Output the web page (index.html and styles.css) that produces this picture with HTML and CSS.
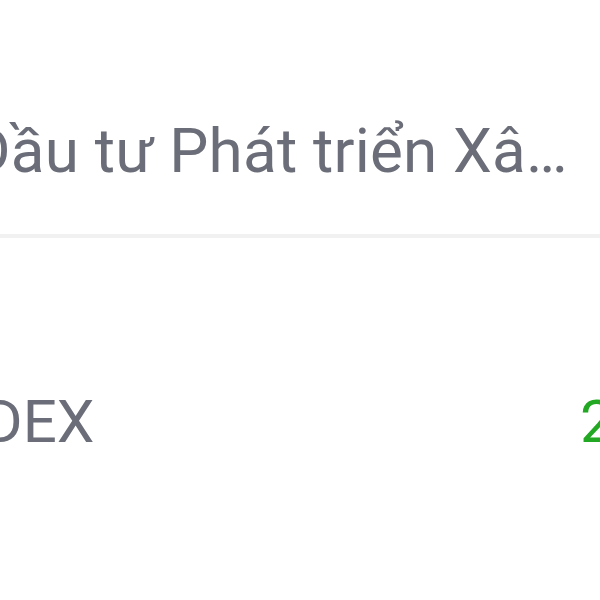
FILE: index.html
```html
<!DOCTYPE html>
<html lang="vi">
<head>
<meta charset="utf-8">
<link rel="stylesheet" href="styles.css">
</head>
<body>
<div class="screen">
  <div class="item">
    <div class="title">Đầu tư Phát triển Xâ…</div>
  </div>
  <div class="divider"></div>
  <div class="row">
    <div class="code">IDEX</div>
    <div class="value">21.500</div>
  </div>
</div>
</body>
</html>
```
FILE: styles.css
```css
html, body {
  margin: 0;
  padding: 0;
  background: #ffffff;
  overflow: hidden;
  width: 600px;
  height: 600px;
}
.screen {
  width: 600px;
  height: 600px;
  overflow: hidden;
  font-family: Roboto, "Noto Sans", sans-serif;
  color: #6b6e78;
}
.item {
  padding-top: 120px;
  height: 114px;
  margin-left: -31px;
}
.title {
  font-size: 62px;
  line-height: 62px;
  white-space: nowrap;
  letter-spacing: 0.2px;
}
.divider {
  height: 4px;
  background: #f1f1f2;
}
.row {
  display: flex;
  justify-content: space-between;
  margin-top: 154px;
  margin-left: -33px;
  margin-right: -200px;
  font-size: 60px;
  line-height: 60px;
}
.value {
  color: #22a822;
  width: 220px;
}
```
